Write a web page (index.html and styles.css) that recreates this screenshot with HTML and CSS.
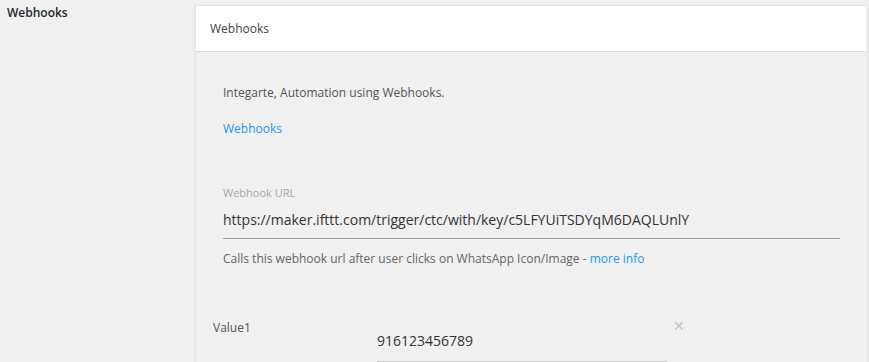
FILE: index.html
```html
<!DOCTYPE html>
<html lang="en">
<head>
  <meta charset="UTF-8">
  <title>Webhooks</title>
  <link rel="stylesheet" href="styles.css">
</head>
<body>
  <div class="form-row">
    <div class="row-label">Webhooks</div>
    <div class="card">
      <div class="card-header">Webhooks</div>
      <div class="card-body">
        <p class="intro">Integarte, Automation using Webhooks.</p>
        <p class="intro-link"><a href="#">Webhooks</a></p>

        <div class="field">
          <label class="field-label">Webhook URL</label>
          <input class="field-input" type="text" value="https://maker.ifttt.com/trigger/ctc/with/key/c5LFYUiTSDYqM6DAQLUnlY">
          <p class="field-help">Calls this webhook url after user clicks on WhatsApp Icon/Image - <a href="#">more info</a></p>
        </div>

        <div class="value-row">
          <div class="value-label">Value1</div>
          <input class="value-input" type="text" value="916123456789">
          <span class="value-remove">&#x2715;</span>
        </div>
      </div>
    </div>
  </div>
</body>
</html>
```

FILE: styles.css
```css
body {
  margin: 0;
  background-color: #f0f0f0;
  font-family: "Open Sans", "Noto Sans", sans-serif;
  color: #444;
  overflow: hidden;
}
a {
  color: #2196f3;
  text-decoration: none;
}
.form-row {
  display: grid;
  grid-template-columns: 195px 673px;
  padding-top: 5px;
}
.row-label {
  padding-left: 7px;
  margin-top: -1px;
  font-size: 12px;
  font-weight: 600;
  color: #23282d;
}
.card {
  border: 1px solid #e2e2e2;
  box-shadow: 0 1px 2px rgba(0, 0, 0, 0.08);
}
.card-header {
  background: #ffffff;
  height: 45px;
  line-height: 46px;
  padding-left: 14px;
  font-size: 12px;
  color: #444;
  border-bottom: 1px solid #dddddd;
}
.card-body {
  padding: 31px 27px 0 27px;
  height: 400px;
}
.intro {
  margin: 0;
  font-size: 12px;
  line-height: 20px;
  color: #555;
}
.intro-link {
  margin: 16px 0 0;
  font-size: 12px;
  line-height: 20px;
}
.field {
  margin-top: 47px;
}
.field-label {
  display: block;
  font-size: 11px;
  color: #a8a8a8;
  line-height: 14px;
}
.field-input,
.value-input {
  display: block;
  width: 100%;
  box-sizing: border-box;
  border: none;
  border-bottom: 1px solid #9e9e9e;
  background: transparent;
  font-family: inherit;
  font-size: 14px;
  color: #333;
  height: 39px;
  padding: 0;
  margin: 0;
  outline: none;
}
.field-help {
  margin: 11px 0 0;
  font-size: 12px;
  color: #666;
  line-height: 18px;
}
.value-row {
  display: flex;
  align-items: flex-start;
  margin-top: 47px;
  margin-left: -10px;
}
.value-label {
  width: 164px;
  font-size: 12px;
  color: #555;
  padding-top: 4px;
}
.value-input {
  width: 290px;
  height: 43px;
  margin-top: 4px;
  border-bottom-color: #c8c8c8;
}
.value-remove {
  margin-left: 6px;
  padding-top: 1px;
  font-size: 14px;
  color: #c4c4c4;
}
```
